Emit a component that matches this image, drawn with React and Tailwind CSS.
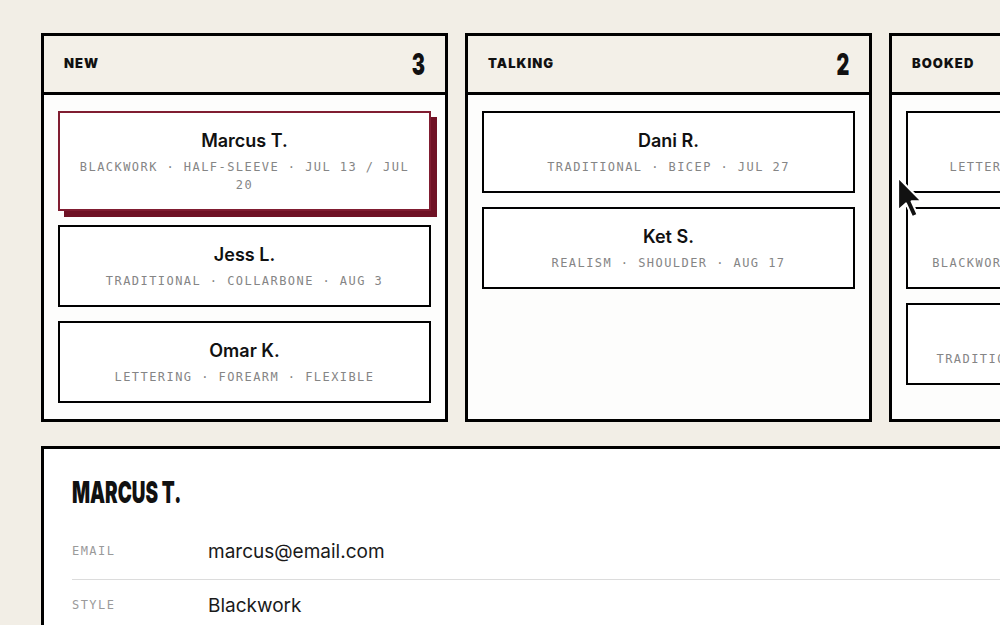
import React from "react";

const columns = [
  {
    title: "NEW",
    count: 3,
    cards: [
      { name: "Marcus T.", meta: "BLACKWORK · HALF-SLEEVE · JUL 13 / JUL 20", active: true },
      { name: "Jess L.", meta: "TRADITIONAL · COLLARBONE · AUG 3" },
      { name: "Omar K.", meta: "LETTERING · FOREARM · FLEXIBLE" },
    ],
  },
  {
    title: "TALKING",
    count: 2,
    cards: [
      { name: "Dani R.", meta: "TRADITIONAL · BICEP · JUL 27" },
      { name: "Ket S.", meta: "REALISM · SHOULDER · AUG 17" },
    ],
  },
  {
    title: "BOOKED",
    count: 3,
    cards: [
      { name: "Priya N.", meta: "LETTERING · SHOULDER · AUG 9 / 10" },
      { name: "Leo M.", meta: "BLACKWORK · FULL SLEEVE · SEP 14 / 15" },
      { name: "Sam W.", meta: "TRADITIONAL · CALF · SEP 20 / SEP 21" },
    ],
  },
];

const sans = "font-['Inter','Noto_Sans',sans-serif]";
const mono = "font-['DejaVu_Sans_Mono','Liberation_Mono',monospace]";

function Card({ name, meta, active }) {
  return (
    <div
      className={
        "flex flex-col items-center gap-1 bg-white px-4 py-[15px] text-center border-2 " +
        (active ? "border-[#801d31] shadow-[6px_6px_0_#6f1124]" : "border-black")
      }
    >
      <div className={`${sans} text-[18px] leading-[26px] font-semibold text-[#111]`}>{name}</div>
      <div className={`${mono} text-[12px] leading-[18px] tracking-[0.12em] text-[#858585]`}>{meta}</div>
    </div>
  );
}

function Column({ title, count, cards }) {
  return (
    <div className="flex w-[407px] flex-none flex-col border-[3px] border-black bg-[#fdfdfc]">
      <div className="flex h-[59px] items-center justify-between border-b-[3px] border-black bg-[#f3f0e8] px-5">
        <span className={`${sans} text-[13px] font-black tracking-[0.08em] text-[#111]`}>{title}</span>
        <span
          className={`${sans} inline-block origin-right scale-x-[0.66] text-[30px] leading-none font-black text-[#111]`}
        >
          {count}
        </span>
      </div>
      <div className="flex flex-col gap-[14px] px-[14px] pt-4 pb-4">
        {cards.map((c) => (
          <Card key={c.name} {...c} />
        ))}
      </div>
    </div>
  );
}

function Pointer() {
  return (
    <svg
      className="pointer-events-none absolute left-[896px] top-[175px] z-10"
      width="28"
      height="45"
      viewBox="0 0 13.5 21.5"
    >
      <path
        d="M1 1 L1 17 L4.8 13.6 L7.8 20.2 L10.4 19 L7.5 12.6 L12.4 12.6 Z"
        fill="#111"
        stroke="#fff"
        strokeWidth="1"
        strokeLinejoin="round"
      />
    </svg>
  );
}

export default function App() {
  return (
    <div className="relative h-[625px] w-full overflow-hidden bg-[#f2eee6]">
      <div className="flex flex-col gap-6 pt-[33px] pl-[41px]">
        <div className="flex gap-[17px]">
          {columns.map((col) => (
            <Column key={col.title} {...col} />
          ))}
        </div>

        <div className="w-[1100px] border-[3px] border-black bg-white px-7 pt-7">
          <h2
            className={`${sans} inline-block origin-left scale-x-[0.63] text-[30px] leading-none font-black text-[#111]`}
          >
            MARCUS T.
          </h2>
          <div className="mt-[17px]">
            <div className="flex h-[54px] items-center border-b border-[#dcdcdc]">
              <span className={`${mono} w-[136px] pb-1 text-[12px] tracking-[0.12em] text-[#9a9a9a]`}>EMAIL</span>
              <span className={`${sans} text-[19px] text-[#1a1a1a]`}>marcus@email.com</span>
            </div>
            <div className="flex h-[54px] items-center border-b border-[#dcdcdc]">
              <span className={`${mono} w-[136px] pb-1 text-[12px] tracking-[0.12em] text-[#9a9a9a]`}>STYLE</span>
              <span className={`${sans} text-[19px] text-[#1a1a1a]`}>Blackwork</span>
            </div>
          </div>
        </div>
      </div>
      <Pointer />
    </div>
  );
}
